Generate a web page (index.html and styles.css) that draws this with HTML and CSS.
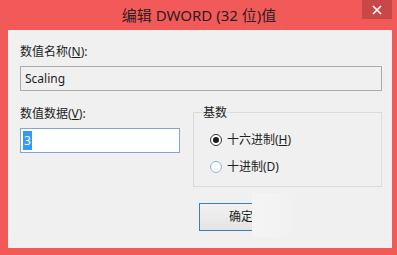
FILE: index.html
```html
<!DOCTYPE html>
<html lang="zh-CN">
<head>
<meta charset="utf-8">
<title>编辑 DWORD (32 位)值</title>
<link rel="stylesheet" href="styles.css">
</head>
<body>
<div class="window">
  <div class="titlebar">
    <div class="spacer"></div>
    <div class="title">编辑 DWORD (32 位)值</div>
    <div class="controls">
      <div class="close">
        <svg width="12" height="12" viewBox="0 0 12 12"><path d="M2 2 L10 10 M10 2 L2 10" stroke="#fff" stroke-width="1.6" fill="none"/></svg>
      </div>
    </div>
  </div>
  <div class="content">
    <div class="label">数值名称(<u>N</u>):</div>
    <div class="input name-input">Scaling</div>
    <div class="row">
      <div class="left">
        <div class="label">数值数据(<u>V</u>):</div>
        <div class="input data-input"><span class="sel">3</span></div>
      </div>
      <fieldset class="group">
        <legend>基数</legend>
        <div class="radio">
          <svg width="12" height="12" viewBox="0 0 12 12"><circle cx="6" cy="6" r="5.5" fill="#fff" stroke="#333" stroke-width="1"/><circle cx="6" cy="6" r="3" fill="#1a1a1a"/></svg>
          <span>十六进制(<u>H</u>)</span>
        </div>
        <div class="radio">
          <svg width="12" height="12" viewBox="0 0 12 12"><circle cx="6" cy="6" r="5.5" fill="#fff" stroke="#86b3e0" stroke-width="1"/></svg>
          <span>十进制(D)</span>
        </div>
      </fieldset>
    </div>
    <div class="buttons">
      <div class="btn"><span>确定</span></div>
      <div class="smudge"></div>
    </div>
  </div>
</div>
</body>
</html>
```
FILE: styles.css
```css
html, body {
  margin: 0;
  padding: 0;
}
body {
  width: 397px;
  height: 255px;
  overflow: hidden;
  background: #f25a5a;
  font-family: "Noto Sans", "Noto Sans CJK SC", sans-serif;
  font-size: 12px;
  color: #1e1e1e;
}
.window {
  width: 397px;
  height: 255px;
  display: flex;
  flex-direction: column;
}
.titlebar {
  height: 30px;
  display: grid;
  grid-template-columns: 1fr auto 1fr;
  padding: 0 5px;
}
.title {
  font-size: 15px;
  line-height: 30px;
  color: #2a2020;
  padding-left: 1px;
}
.controls {
  display: flex;
  justify-content: flex-end;
  align-items: flex-start;
}
.close {
  width: 30px;
  height: 19px;
  background: #c84848;
  display: flex;
  align-items: center;
  justify-content: center;
}
.content {
  margin: 0 5px 7px 8px;
  height: 218px;
  background: #f0f0f0;
  box-sizing: border-box;
  padding: 14px 0 0 12px;
}
.label {
  line-height: 16px;
  height: 16px;
}
.input {
  box-sizing: border-box;
  height: 25px;
  margin-top: 6px;
  line-height: 23px;
  padding-left: 4px;
}
.name-input {
  width: 362px;
  border: 1px solid #acacac;
  background: #f0f0f0;
}
.row {
  display: flex;
  margin-top: 15px;
}
.left {
  width: 160px;
}
.data-input {
  width: 160px;
  border: 1px solid #7ea7d3;
  background: #fff;
  padding-left: 2px;
  display: flex;
  align-items: center;
}
.sel {
  display: inline-block;
  background: #3399ff;
  color: #fff;
  height: 19px;
  line-height: 19px;
  padding: 0 1px;
}
.group {
  margin: -1px 0 0 13px;
  width: 189px;
  height: 82px;
  box-sizing: border-box;
  border: 1px solid #dadada;
  padding: 0 0 0 16px;
  display: flex;
  flex-direction: column;
}
.group legend {
  padding: 0 1px;
  margin-left: -8px;
  line-height: 15px;
  font-size: 12px;
}
.radio {
  display: flex;
  align-items: center;
  gap: 5px;
  height: 16px;
  line-height: 16px;
}
.radio:first-of-type {
  margin-top: 12px;
}
.radio + .radio {
  margin-top: 11px;
}
.buttons {
  display: flex;
  margin-top: 16px;
  padding-left: 179px;
}
.btn {
  width: 53px;
  height: 28px;
  box-sizing: border-box;
  border: 1px solid #3c7fb1;
  border-right: none;
  background: linear-gradient(#f2f2f2, #e4e4e4);
  display: flex;
  align-items: center;
  justify-content: flex-end;
  overflow: hidden;
}
.btn span {
  line-height: 16px;
  margin-right: -1px;
}
.smudge {
  width: 44px;
  height: 44px;
  margin-top: -10px;
  background: linear-gradient(90deg, #f4f4f4, #f2f2f2 70%, #f0f0f0);
}
```
